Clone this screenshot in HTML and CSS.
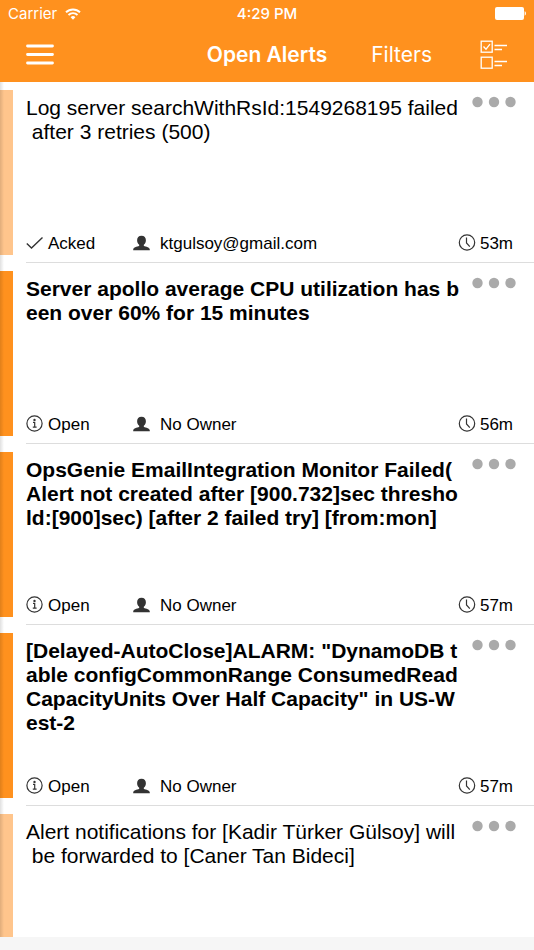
FILE: index.html
```html
<!DOCTYPE html>
<html lang="en">
<head>
<meta charset="utf-8">
<meta name="viewport" content="width=device-width, initial-scale=1">
<title>Open Alerts</title>
<link rel="stylesheet" href="styles.css">
</head>
<body>
<svg class="symbols" aria-hidden="true">
  <symbol id="check" viewBox="0 0 18 18"><path d="M.8 9.500 L5.500 14 L16.500 3.500" fill="none" stroke="#333" stroke-width="1.4"/></symbol>
  <symbol id="info" viewBox="0 0 18 18"><circle cx="8.500" cy="8.500" r="7.600" fill="none" stroke="#333" stroke-width="1.200"/><circle cx="8.500" cy="4.900" r="1.200" fill="#333"/><path d="M7 7.300H8.700V12M6.800 12.200H10.600" fill="none" stroke="#333" stroke-width="1.200"/></symbol>
  <symbol id="person" viewBox="0 0 18 18"><path d="M8.500 1.800c2.900 0 4.400 1.900 4.400 4.500 0 1.900-.9 3.600-2.100 4.500v1c0 .5 5.800.9 6 3.600v.8H.2v-.8c.2-2.700 6-3.100 6-3.600v-1C5 9.900 4.100 8.200 4.100 6.300 4.100 3.700 5.600 1.800 8.500 1.800z" fill="#333"/></symbol>
  <symbol id="clock" viewBox="0 0 18 18"><circle cx="9" cy="8.500" r="7.700" fill="none" stroke="#333" stroke-width="1.200"/><path d="M8.500 3.500V9L11.800 12.600" fill="none" stroke="#333" stroke-width="1.200"/></symbol>
  <symbol id="dots" viewBox="0 0 44 12"><circle cx="5.500" cy="6" r="5.200" fill="#aaa"/><circle cx="22" cy="6" r="5.200" fill="#aaa"/><circle cx="38.500" cy="6" r="5.200" fill="#aaa"/></symbol>
</svg>

<header class="top">
  <div class="status">
    <div class="carrier">
      <span>Carrier</span>
      <svg width="16" height="12" viewBox="0 0 16 12" aria-hidden="true"><g fill="none" stroke="#fff" stroke-width="1.900"><path d="M1 4.300a10 10 0 0 1 14 0"/><path d="M3.500 7a6.400 6.400 0 0 1 9 0"/></g><path d="M8 11.800 5.600 9.300a3.400 3.400 0 0 1 4.800 0z" fill="#fff"/></svg>
    </div>
    <time>4:29 PM</time>
    <svg class="battery" width="32" height="13" viewBox="0 0 32 13" aria-hidden="true"><rect x="1" width="29" height="13" rx="2" fill="#fff"/><path d="M30.600 4.300c1.800.6 1.800 3.800 0 4.400z" fill="#fff"/></svg>
  </div>
  <nav class="bar">
    <button class="icon-button menu" type="button" aria-label="Menu">
      <svg width="28" height="21" viewBox="0 0 28 21"><path d="M1.500 2H26.500M1.500 10.500H26.500M1.500 19H26.500" stroke="#fff" stroke-width="2.800" stroke-linecap="round"/></svg>
    </button>
    <h1>Open Alerts</h1>
    <div class="actions">
      <button class="filters" type="button">Filters</button>
      <button class="icon-button" type="button" aria-label="Select alerts">
        <svg width="28" height="30" viewBox="0 0 28 30" fill="none" stroke="#fff"><g stroke-width="1.300"><rect x="1.200" y="1.200" width="11" height="11"/><rect x="1.200" y="17.200" width="11" height="11"/><path d="M3.500 6.500l2.500 2.700 4-5M14.500 5.500H27M14.500 9.500H22M14.500 21.500H27M14.500 25.500H22"/></g></svg>
      </button>
    </div>
  </nav>
</header>

<main class="alerts">
  <article class="alert seen">
    <div class="body">
      <div class="head">
        <h2>Log server searchWithRsId:1549268195 failed
 after 3 retries (500)</h2>
        <button class="icon-button" type="button" aria-label="More"><svg width="44" height="12"><use href="#dots"/></svg></button>
      </div>
      <div class="meta">
        <span class="state"><svg width="18" height="18"><use href="#check"/></svg>Acked</span>
        <span class="owner"><svg width="18" height="18"><use href="#person"/></svg><span class="name">ktgulsoy@gmail.com</span></span>
        <span class="age"><svg width="18" height="18"><use href="#clock"/></svg>53m</span>
      </div>
    </div>
  </article>
  <article class="alert">
    <div class="body">
      <div class="head">
        <h2>Server apollo average CPU utilization has b
een over 60% for 15 minutes</h2>
        <button class="icon-button" type="button" aria-label="More"><svg width="44" height="12"><use href="#dots"/></svg></button>
      </div>
      <div class="meta">
        <span class="state"><svg width="18" height="18"><use href="#info"/></svg>Open</span>
        <span class="owner"><svg width="18" height="18"><use href="#person"/></svg><span class="name">No Owner</span></span>
        <span class="age"><svg width="18" height="18"><use href="#clock"/></svg>56m</span>
      </div>
    </div>
  </article>
  <article class="alert">
    <div class="body">
      <div class="head">
        <h2>OpsGenie EmailIntegration Monitor Failed(
Alert not created after [900.732]sec thresho
ld:[900]sec) [after 2 failed try] [from:mon]</h2>
        <button class="icon-button" type="button" aria-label="More"><svg width="44" height="12"><use href="#dots"/></svg></button>
      </div>
      <div class="meta">
        <span class="state"><svg width="18" height="18"><use href="#info"/></svg>Open</span>
        <span class="owner"><svg width="18" height="18"><use href="#person"/></svg><span class="name">No Owner</span></span>
        <span class="age"><svg width="18" height="18"><use href="#clock"/></svg>57m</span>
      </div>
    </div>
  </article>
  <article class="alert">
    <div class="body">
      <div class="head">
        <h2>[Delayed-AutoClose]ALARM: "DynamoDB t
able configCommonRange ConsumedRead
CapacityUnits Over Half Capacity" in US-W
est-2</h2>
        <button class="icon-button" type="button" aria-label="More"><svg width="44" height="12"><use href="#dots"/></svg></button>
      </div>
      <div class="meta">
        <span class="state"><svg width="18" height="18"><use href="#info"/></svg>Open</span>
        <span class="owner"><svg width="18" height="18"><use href="#person"/></svg><span class="name">No Owner</span></span>
        <span class="age"><svg width="18" height="18"><use href="#clock"/></svg>57m</span>
      </div>
    </div>
  </article>
  <article class="alert seen partial">
    <div class="body">
      <div class="head">
        <h2>Alert notifications for [Kadir Türker Gülsoy] will
 be forwarded to [Caner Tan Bideci]</h2>
        <button class="icon-button" type="button" aria-label="More"><svg width="44" height="12"><use href="#dots"/></svg></button>
      </div>
    </div>
  </article>
</main>
<footer class="toolbar"></footer>
</body>
</html>
```
FILE: styles.css
```css
* {
  box-sizing: border-box;
}

body {
  margin: 0;
  min-height: 100vh;
  display: flex;
  flex-direction: column;
  background: #fff;
  color: #000;
  font-family: "Liberation Sans", Arial, sans-serif;
}

svg {
  display: block;
  flex: none;
}

.symbols {
  display: none;
}

button {
  border: 0;
  padding: 0;
  background: none;
  color: inherit;
  font: inherit;
}

.top {
  background: #ff911e;
  color: #fff;
  font-family: Inter, sans-serif;
}

.status,
.bar {
  display: grid;
  grid-template-columns: 1fr auto 1fr;
  align-items: center;
}

.status {
  height: 27px;
  padding: 0 8px;
  font-size: 15px;
}

.carrier {
  display: flex;
  align-items: center;
  gap: 8px;
}

.status time {
  font-weight: 500;
}

.battery {
  justify-self: end;
}

.bar {
  height: 55px;
  padding: 0 26px;
}

.menu {
  justify-self: start;
}

h1 {
  margin: 0;
  font-size: 21px;
  font-weight: 600;
}

.actions {
  display: flex;
  justify-content: flex-end;
  align-items: center;
  gap: 48px;
}

.filters {
  font-size: 21px;
}

.alerts {
  flex: 1;
  position: relative;
}

.alerts::before {
  content: "";
  position: absolute;
  inset: 0 auto 0 0;
  width: 4px;
  background: linear-gradient(to right, rgba(0, 0, 0, 0.12), transparent);
}

.alert {
  display: flex;
  gap: 13px;
  height: 181px;
}

.alert::before {
  content: "";
  width: 13px;
  margin: 8px 0;
  background: #ff911e;
}

.seen::before {
  background: #ffc58c;
}

.body {
  flex: 1;
  display: flex;
  flex-direction: column;
  justify-content: space-between;
  padding: 14px 0 8px;
  border-bottom: 1px solid #ddd;
}

.head {
  display: flex;
  justify-content: space-between;
  align-items: flex-start;
  padding-right: 18px;
}

h2 {
  flex: 1;
  width: 0;
  margin: 0;
  font-size: 21px;
  line-height: 24px;
  font-weight: 700;
  white-space: pre;
}

.seen h2 {
  font-weight: 400;
}

.meta {
  display: grid;
  grid-template-columns: 107px 1fr auto;
  padding-right: 21px;
  font-size: 17px;
  line-height: 20px;
}

.state,
.owner,
.age {
  display: flex;
  gap: 4px;
}

.owner {
  gap: 9px;
}

.partial {
  height: 131px;
}

.partial::before {
  margin-bottom: 0;
}

.partial .body {
  border-bottom: 0;
}

.toolbar {
  height: 13px;
  background: #f6f6f6;
}
```
